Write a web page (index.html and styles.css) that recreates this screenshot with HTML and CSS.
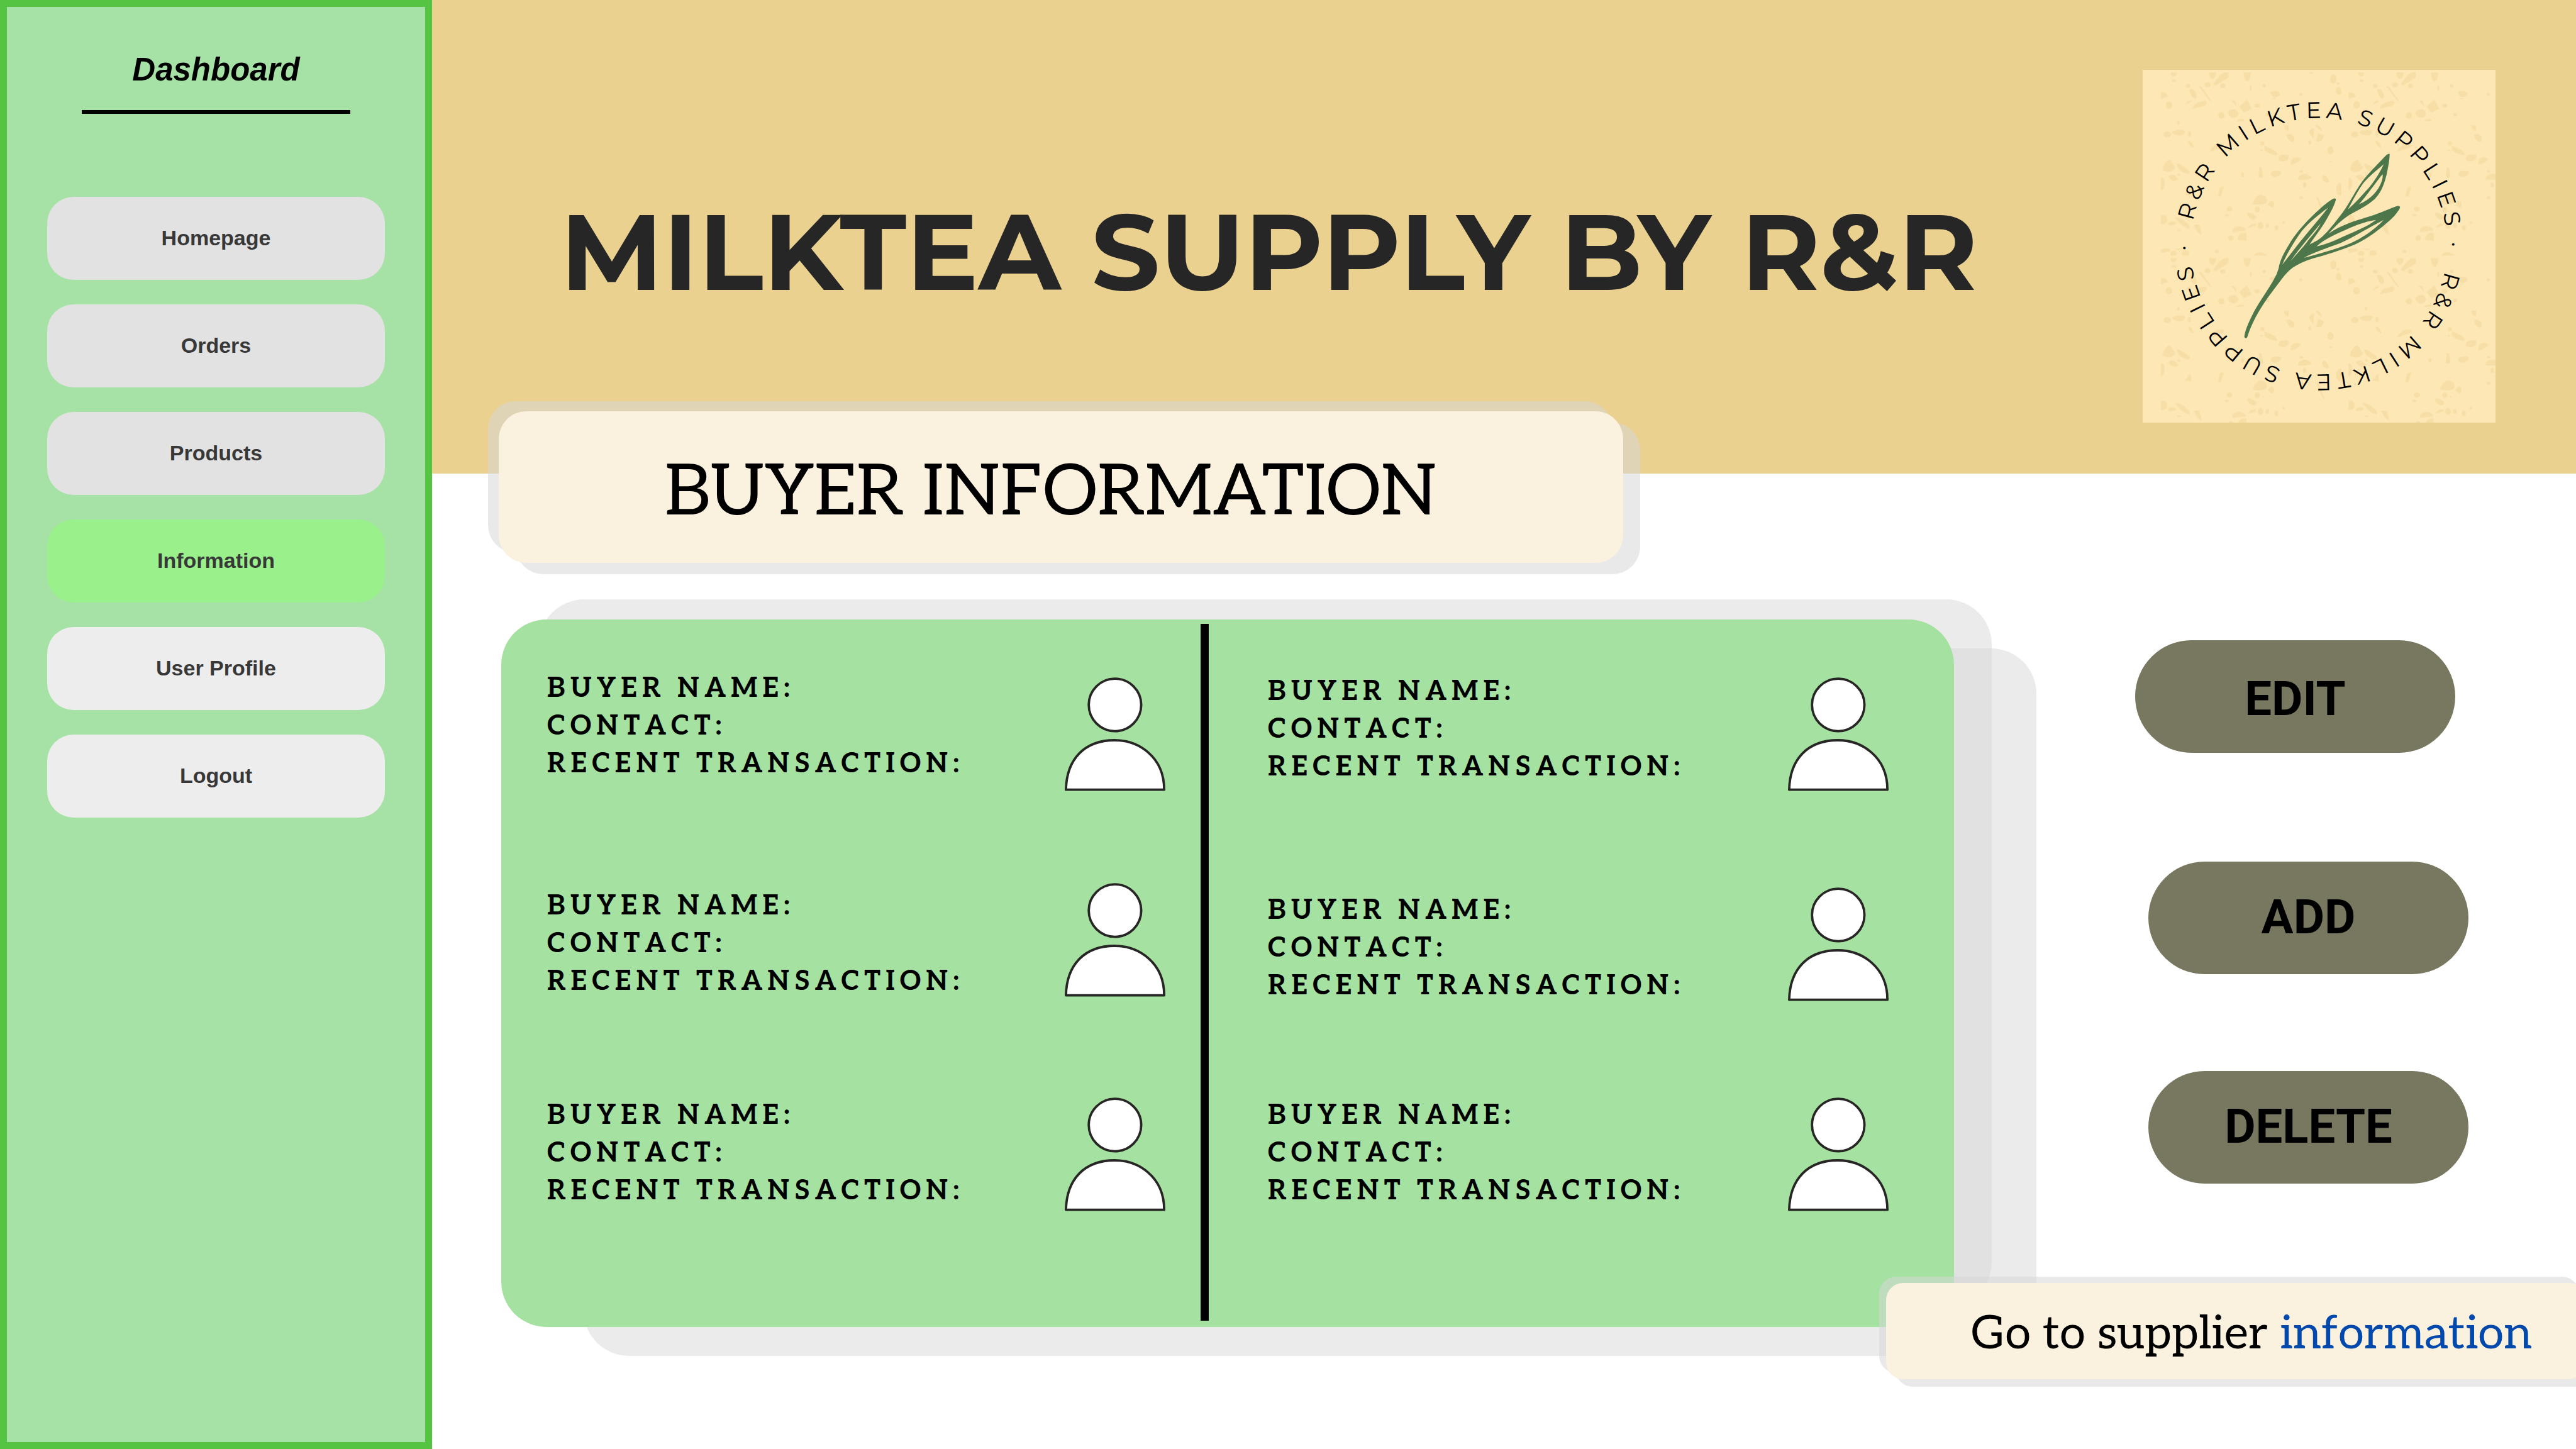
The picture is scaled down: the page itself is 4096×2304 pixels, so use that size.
FILE: index.html
```html
<!DOCTYPE html>
<html lang="en">
<head>
<meta charset="utf-8">
<meta name="viewport" content="width=device-width, initial-scale=1">
<title>Milktea Supply by R&amp;R</title>
<link rel="stylesheet" href="styles.css">
</head>
<body>
<svg class="symbols" aria-hidden="true">
  <symbol id="avatar" viewBox="249 192 675 762">
    <circle cx="586" cy="376" r="176"/>
    <path d="M257 945C262 740 380 613 584 613C740 613 916 720 916 945Z"/>
  </symbol>
</svg>

<aside class="sidebar">
  <h2 class="sidebar-title">Dashboard</h2>
  <nav class="menu">
    <button class="menu-item" type="button">Homepage</button>
    <button class="menu-item" type="button">Orders</button>
    <button class="menu-item" type="button">Products</button>
    <button class="menu-item menu-item--active" type="button">Information</button>
    <button class="menu-item menu-item--light" type="button">User Profile</button>
    <button class="menu-item menu-item--light" type="button">Logout</button>
  </nav>
</aside>

<main class="main">
  <header class="banner">
    <h1 class="banner-title">MILKTEA SUPPLY BY R&amp;R</h1>
    <svg class="logo" viewBox="0 0 561 561" role="img" aria-label="R&amp;R Milktea Supplies">
      <defs>
        <pattern id="terrazzo" patternUnits="userSpaceOnUse" x="48" y="18" width="1258" height="1246" patternTransform="scale(.237) translate(27 -18)">
          <g class="speckle">
            <path d="M112 18H154Q150 45 130 45Q112 40 112 18ZM370 18H418Q415 60 390 62Q368 50 370 18ZM440 40L470 18H500V52L415 105Q395 100 402 88ZM602 18H650Q650 70 626 78Q602 68 602 18Z"/>
            <ellipse cx="135" cy="73" rx="15" ry="9"/><ellipse cx="228" cy="108" rx="16" ry="13"/><ellipse cx="360" cy="101" rx="20" ry="17"/><ellipse cx="463" cy="107" rx="17" ry="15"/><ellipse cx="740" cy="107" rx="11" ry="11"/><ellipse cx="650" cy="123" rx="7" ry="19"/>
            <path d="M48 150L78 155L98 178L48 196ZM240 130Q268 122 285 160Q292 190 275 194Q242 178 240 130ZM300 108L318 112L390 215L372 205ZM258 262Q268 215 345 208Q370 220 340 242Q300 250 258 262ZM212 232Q225 205 250 205Q262 215 212 232Z"/>
            <ellipse cx="102" cy="236" rx="22" ry="25"/><ellipse cx="693" cy="240" rx="18" ry="14"/>
            <path d="M572 245L625 200L656 262L604 286ZM518 203L545 206L556 248ZM497 290Q505 262 545 264Q580 290 560 312Q520 340 497 290ZM430 305Q440 280 465 285Q475 300 472 322Q440 338 430 305ZM552 345Q570 325 600 330Q625 345 552 345ZM780 150Q800 135 830 145Q855 160 845 172Q800 205 780 150ZM784 200L815 186L815 196Z"/>
            <ellipse cx="1204" cy="62" rx="21" ry="31"/><ellipse cx="986" cy="164" rx="11" ry="10"/><ellipse cx="1236" cy="92" rx="13" ry="8"/>
            <path d="M1218 145Q1225 112 1245 115L1265 152Q1240 185 1218 145ZM1284 155Q1300 145 1306 150V190Q1286 180 1284 155ZM1035 18H1076Q1056 36 1035 18Z"/>
            <ellipse cx="763" cy="300" rx="13" ry="12"/><ellipse cx="165" cy="356" rx="9" ry="14"/><ellipse cx="90" cy="434" rx="25" ry="20"/><ellipse cx="239" cy="430" rx="10" ry="18"/>
            <path d="M118 418Q160 395 205 406Q215 425 190 438Q150 448 118 418ZM228 475Q255 475 268 524Q235 515 228 475ZM372 550Q395 500 450 495Q485 500 465 518Q410 540 372 550ZM890 435Q915 420 942 450Q948 480 930 485Q895 475 890 435ZM742 508L800 535Q832 555 826 573Q790 575 742 540Z"/>
            <path d="M835 605Q840 570 860 570H904V590Q895 618 855 614ZM918 637Q915 590 955 585L987 596Q975 625 918 637ZM1042 420Q1050 390 1075 390L1070 462ZM1085 372Q1120 365 1128 412Q1100 400 1085 372ZM1090 480L1100 425L1142 440Q1135 475 1110 482ZM870 372H905V405Q880 415 870 372Z"/>
            <ellipse cx="728" cy="494" rx="14" ry="14"/><ellipse cx="1047" cy="487" rx="10" ry="15"/><ellipse cx="1185" cy="540" rx="21" ry="26"/><ellipse cx="1186" cy="615" rx="8" ry="6"/><ellipse cx="722" cy="540" rx="7" ry="6"/>
            <path d="M60 672Q65 615 108 602L145 655Q125 690 85 684ZM152 630Q175 625 240 680Q245 695 225 698Q160 680 152 630ZM98 718Q105 700 135 705L165 735Q130 765 98 718ZM48 725Q75 720 73 770Q65 810 48 810Z"/>
            <path d="M706 655L722 655L734 722L702 724ZM782 698Q790 672 850 680Q860 685 845 708Q800 735 782 698ZM965 735Q970 700 1020 698Q1060 715 1058 728Q1010 745 965 735ZM1130 730Q1128 700 1150 710Q1180 735 1174 756Q1135 760 1130 730Z"/>
            <ellipse cx="595" cy="704" rx="10" ry="16"/><ellipse cx="988" cy="683" rx="11" ry="9"/><ellipse cx="1012" cy="771" rx="12" ry="18"/><ellipse cx="1248" cy="802" rx="25" ry="42"/><ellipse cx="1306" cy="766" rx="21" ry="43"/><ellipse cx="168" cy="706" rx="10" ry="9"/>
            <path d="M208 840L246 790L252 845ZM440 795Q455 780 468 788L450 850H430ZM662 900Q675 850 715 838Q755 842 762 880Q755 905 700 905ZM766 905Q775 875 800 882Q818 905 795 928ZM1088 850L1102 855L1150 970Q1125 955 1088 850Z"/>
            <ellipse cx="507" cy="935" rx="20" ry="17"/><ellipse cx="694" cy="938" rx="18" ry="19"/><ellipse cx="988" cy="857" rx="14" ry="10"/><ellipse cx="735" cy="948" rx="5" ry="6"/><ellipse cx="490" cy="976" rx="14" ry="9"/><ellipse cx="870" cy="1025" rx="10" ry="9"/>
            <path d="M626 960Q650 952 690 985Q690 1005 665 1006Q630 995 626 960ZM48 975Q90 965 90 1015Q80 1040 48 1036ZM95 1028Q115 1010 150 1024Q155 1045 100 1042ZM142 990Q170 980 235 1040L240 1068Q180 1050 142 990ZM268 1040H305L322 1108Q285 1095 268 1040Z"/>
            <path d="M526 1088Q525 1050 575 1048Q620 1058 616 1080ZM560 1142Q565 1105 590 1095L620 1092V1148ZM630 1060Q645 1030 685 1032L680 1048ZM696 1050Q700 1020 720 1020Q740 1035 732 1060Q710 1080 696 1050ZM662 1258Q680 1220 720 1225Q770 1240 760 1254Z"/>
            <ellipse cx="516" cy="1129" rx="18" ry="18"/><ellipse cx="762" cy="1045" rx="12" ry="16"/><ellipse cx="822" cy="1060" rx="13" ry="18"/><ellipse cx="132" cy="1232" rx="22" ry="18"/><ellipse cx="212" cy="1230" rx="25" ry="20"/><ellipse cx="422" cy="1218" rx="14" ry="11"/><ellipse cx="168" cy="1078" rx="14" ry="6"/>
            <path d="M48 1205Q75 1192 110 1202L108 1218L48 1228ZM136 1202L195 1198L175 1212Z"/>
          </g>
        </pattern>
        <path id="ring" d="M80 241A203 203 0 0 1 480 320A203 203 0 0 1 80 241"/>
      </defs>
      <rect class="logo-paper" width="561" height="561"/>
      <rect x="18" width="543" height="561" fill="url(#terrazzo)"/>
      <text class="logo-text"><textPath href="#ring">R&amp;R MILKTEA SUPPLIES ·</textPath></text>
      <text class="logo-text"><textPath href="#ring" startOffset="50%">R&amp;R MILKTEA SUPPLIES ·</textPath></text>
      <g transform="scale(.237) translate(567 492)">
        <path class="leaf" d="M115 1300Q118 1310 127 1309Q135 1305 140 1285C175 1180 240 1080 300 1000C350 935 390 870 440 835C480 810 520 790 570 775C660 750 760 720 850 683C960 635 1070 540 1120 490Q1158 445 1160 430Q1158 418 1135 424C1090 440 1030 468 960 490C860 520 760 550 680 607C710 575 750 530 800 495C850 460 930 430 990 375C1040 325 1055 265 1070 210C1080 160 1090 110 1090 72Q1085 68 1070 78C1010 140 930 220 890 280C850 340 815 410 775 465C725 530 680 590 635 630C605 655 580 665 553 680C580 640 625 580 650 540C685 480 715 430 729 380Q730 368 715 372C680 385 600 460 560 500C500 560 450 620 415 680C385 730 355 780 345 840Q335 880 310 920C270 990 225 1050 180 1130C150 1190 120 1250 115 1300Z"/>
        <path class="logo-paper" d="M370 815C400 740 450 660 500 590C550 530 620 475 677 433C640 480 590 540 540 600C480 670 430 740 370 815ZM425 792C480 710 570 610 626 540C610 580 560 630 530 670C490 720 455 755 425 792ZM810 445C840 390 880 310 920 260C960 215 1010 175 1050 142C1030 185 1000 240 950 300C905 350 860 400 810 445ZM884 410C930 360 1000 260 1042 208C1050 230 1030 290 990 335C960 370 920 395 884 410ZM600 693C640 655 700 625 760 597C840 560 920 525 998 515C940 560 860 590 790 622C720 655 660 680 600 693ZM515 770C570 735 680 700 760 670C860 625 960 560 1050 515C990 580 900 640 820 675C720 715 610 745 515 770Z"/>
      </g>
    </svg>
  </header>

  <h2 class="page-title">BUYER INFORMATION</h2>

  <div class="content">
    <section class="panel" aria-label="Buyers">
      <div class="records records--left">
        <article class="record">
          <p class="record-text">BUYER NAME:<br>CONTACT:<br>RECENT TRANSACTION:</p>
          <svg class="avatar" aria-hidden="true"><use href="#avatar"/></svg>
        </article>
        <article class="record">
          <p class="record-text">BUYER NAME:<br>CONTACT:<br>RECENT TRANSACTION:</p>
          <svg class="avatar" aria-hidden="true"><use href="#avatar"/></svg>
        </article>
        <article class="record">
          <p class="record-text">BUYER NAME:<br>CONTACT:<br>RECENT TRANSACTION:</p>
          <svg class="avatar" aria-hidden="true"><use href="#avatar"/></svg>
        </article>
      </div>
      <div class="divider"></div>
      <div class="records records--right">
        <article class="record">
          <p class="record-text">BUYER NAME:<br>CONTACT:<br>RECENT TRANSACTION:</p>
          <svg class="avatar" aria-hidden="true"><use href="#avatar"/></svg>
        </article>
        <article class="record">
          <p class="record-text">BUYER NAME:<br>CONTACT:<br>RECENT TRANSACTION:</p>
          <svg class="avatar" aria-hidden="true"><use href="#avatar"/></svg>
        </article>
        <article class="record">
          <p class="record-text">BUYER NAME:<br>CONTACT:<br>RECENT TRANSACTION:</p>
          <svg class="avatar" aria-hidden="true"><use href="#avatar"/></svg>
        </article>
      </div>
    </section>

    <div class="actions">
      <button class="action action--edit" type="button">EDIT</button>
      <button class="action" type="button">ADD</button>
      <button class="action" type="button">DELETE</button>
    </div>
  </div>

  <p class="supplier">Go to supplier <a class="supplier-link" href="#supplier">information</a></p>
</main>
</body>
</html>
```
FILE: styles.css
```css
* {
  box-sizing: border-box;
}

body {
  margin: 0;
  min-height: 100vh;
  display: flex;
  background: #fff;
  color: #000;
  font-family: "Liberation Sans", Arial, sans-serif;
  overflow-x: hidden;
}

h1, h2, p {
  margin: 0;
}

button {
  border: 0;
  padding: 0;
  cursor: pointer;
}

.symbols {
  position: absolute;
  width: 0;
  height: 0;
}

/* Sidebar */
.sidebar {
  flex: 0 0 687px;
  padding: 70px 64px;
  border: 11px solid #56c443;
  background: #a6e1a6;
}

.sidebar-title {
  margin: 0 55px;
  padding-bottom: 34px;
  border-bottom: 6px solid #000;
  font-size: 51px;
  font-style: italic;
  line-height: 60px;
  text-align: center;
}

.menu {
  display: flex;
  flex-direction: column;
  gap: 39px;
  margin-top: 132px;
}

.menu-item {
  height: 132px;
  padding-bottom: 2px;
  border-radius: 42px;
  background: #e2e2e2;
  color: #383838;
  font: bold 34px "Liberation Sans", Arial, sans-serif;
}

.menu-item--active {
  background: #9af18c;
}

.menu-item--light {
  background: #ededed;
}

/* Main column */
.main {
  flex: 1;
  min-width: 0;
  display: flex;
  flex-direction: column;
}

.banner {
  display: flex;
  justify-content: space-between;
  align-items: flex-start;
  height: 753px;
  padding: 111px 128px 0 204px;
  background: #ead18f;
}

.banner-title {
  margin-top: 189px;
  color: #262626;
  font-family: Montserrat, Inter, sans-serif;
  font-size: 171px;
  font-weight: 700;
  line-height: 200px;
  white-space: nowrap;
}

.logo {
  flex: none;
  width: 561px;
  height: 561px;
}

.logo-paper {
  fill: #fce7b5;
}

.speckle {
  fill: #f7dea6;
}

.logo-text {
  fill: #000;
  font-family: Montserrat, Lato, sans-serif;
  font-size: 36px;
  letter-spacing: 7px;
}

.leaf {
  fill: #4d774b;
}

.page-title {
  align-self: flex-start;
  width: 1788px;
  margin: -99px 0 0 106px;
  padding: 18px 32px 0 0;
  border-radius: 44px;
  background: #faf1de;
  box-shadow: -17px -16px 0 rgba(215, 215, 215, .55), 27px 18px 0 rgba(215, 215, 215, .55);
  font-family: "Roboto Slab", Aleo, "DejaVu Serif Condensed", serif;
  font-size: 113px;
  font-weight: 400;
  line-height: 223px;
  text-align: center;
}

.content {
  display: flex;
  align-items: flex-start;
  gap: 288px;
  margin-top: 90px;
  padding: 0 171px 0 110px;
}

.panel {
  flex: 1;
  display: grid;
  grid-template-columns: 1112fr 13px 1185fr;
  min-height: 1125px;
  border-radius: 72px;
  background: #a5e2a1;
  box-shadow: 60px -32px 0 rgba(215, 215, 215, .5), 131px 46px 0 rgba(215, 215, 215, .5);
}

.divider {
  margin: 7px 0 10px;
  background: #000;
}

.records {
  display: grid;
  align-content: start;
  padding-top: 78px;
}

.records--left {
  grid-template-rows: 327px 341px auto;
  padding-left: 73px;
  padding-right: 56px;
}

.records--right {
  grid-template-rows: 334px 334px auto;
  padding-left: 94px;
  padding-right: 104px;
}

.record {
  display: flex;
  justify-content: space-between;
  align-items: flex-start;
}

.record-text {
  padding-top: 2px;
  font-family: Aleo, "DejaVu Serif Condensed", "DejaVu Serif", serif;
  font-size: 43px;
  font-weight: 700;
  font-kerning: none;
  letter-spacing: 8px;
  line-height: 60px;
  white-space: nowrap;
}

.records--right .record-text {
  padding-top: 7px;
}

.record:nth-child(2) .record-text {
  padding-top: 21px;
}

.record:nth-child(3) .record-text {
  padding-top: 13px;
}

.avatar {
  flex: none;
  width: 160px;
  height: 181px;
  margin-top: 14px;
  fill: #fff;
  stroke: #282625;
  stroke-width: 16px;
  stroke-linejoin: round;
}

.actions {
  flex: 0 0 530px;
  display: flex;
  flex-direction: column;
  align-items: flex-end;
  gap: 154px;
  padding-top: 33px;
}

.action {
  width: 509px;
  height: 179px;
  padding-bottom: 3px;
  border-radius: 90px;
  background: #787860;
  color: #000;
  font: bold 76px Roboto, sans-serif;
}

.action--edit {
  align-self: flex-start;
  margin-bottom: 19px;
  padding: 6px 0 0;
}

.supplier {
  align-self: flex-end;
  width: 1113px;
  margin: -70px -16px 0 0;
  padding: 10px 0 0 135px;
  border-radius: 27px;
  background: #faf1de;
  box-shadow: -11px -10px 0 rgba(215, 215, 215, .55), 15px 12px 0 rgba(215, 215, 215, .55);
  font-family: "Roboto Slab", Aleo, "DejaVu Serif Condensed", serif;
  font-size: 74px;
  line-height: 143px;
  white-space: nowrap;
}

.supplier-link {
  color: #0149ac;
  text-decoration: none;
}
```
